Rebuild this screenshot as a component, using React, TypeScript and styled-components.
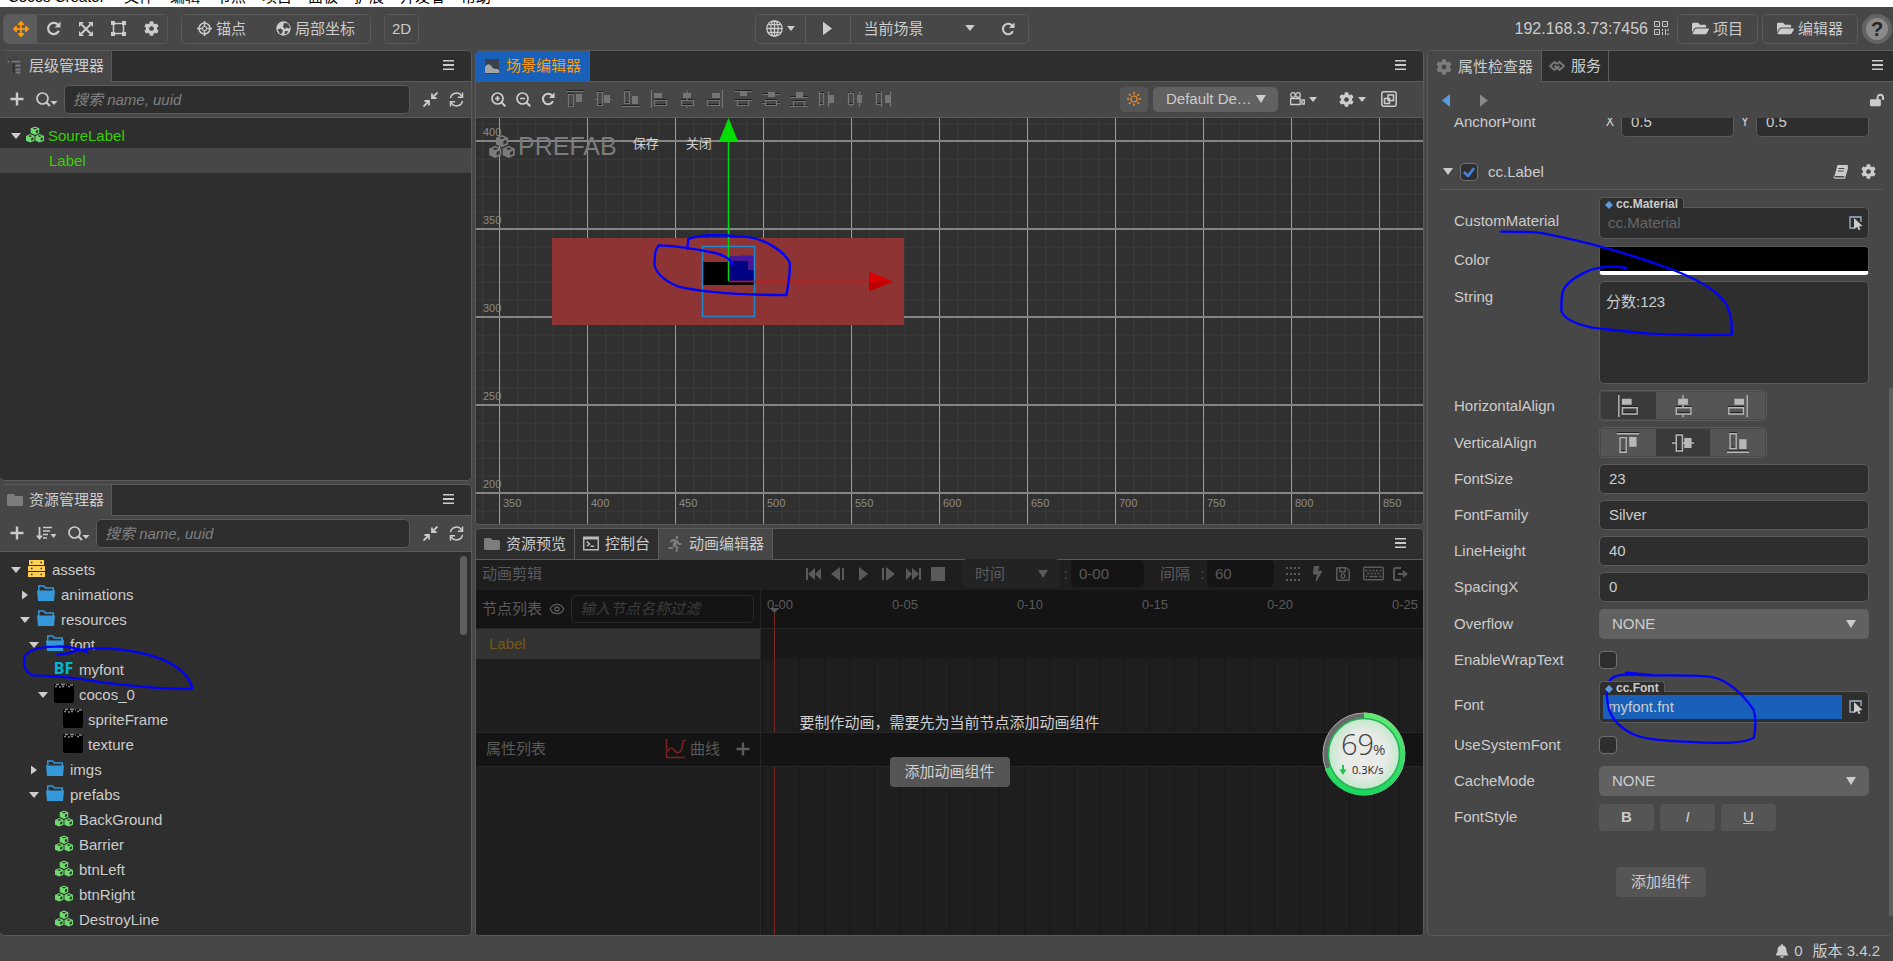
import React from 'react';
import styled, { createGlobalStyle, css } from 'styled-components';
import { FaArrowsAlt, FaBell, FaBolt, FaCog, FaFolder, FaFolderOpen, FaLockOpen, FaRegKeyboard, FaRegSave, FaRunning } from 'react-icons/fa';
import { Eye } from 'lucide-react';

const sans = `"Liberation Sans", "Noto Sans CJK SC", sans-serif`;

const c = {
  panel: '#474747',
  dark: '#2e2e2e',
  line: '#5a5a5a',
  text: '#cccccc',
  button: '#555555',
  select: '#616161',
  blue: '#1860ba',
  orange: '#fd9a08',
  green: '#38d005',
  prefab: '#6fdb6f',
};

const GlobalStyle = createGlobalStyle`
  * { box-sizing: border-box; }
  body { margin: 0; background: ${c.panel}; color: ${c.text}; font: 15px/20px ${sans}; overflow: hidden; }
  button, input, select, textarea { font: inherit; color: inherit; margin: 0; outline: none; }
  button { border: 0; padding: 0; background: none; }
  svg { display: block; flex: none; }
`;

/* ---------- icons ---------- */

const Svg = ({ w = 16, h = 16, vb, children }: { w?: number; h?: number; vb?: string; children: React.ReactNode }) => (
  <svg width={w} height={h} viewBox={vb || `0 0 ${w} ${h}`} fill="none" aria-hidden="true">{children}</svg>
);

const Caret = ({ w = 8, h = 5 }: { w?: number; h?: number }) => (
  <Svg w={w} h={h} vb="0 0 8 5"><path d="M0 0h8L4 5z" fill="currentColor" /></Svg>
);

const TriDown = () => <Svg w={10} h={8}><path d="M0 0h10L5 8z" fill="currentColor" /></Svg>;
const TriRight = ({ w = 8, h = 12 }: { w?: number; h?: number }) => (
  <Svg w={w} h={h} vb="0 0 8 12"><path d="M0 0l8 6-8 6z" fill="currentColor" /></Svg>
);
const TriLeft = () => <Svg w={8} h={13}><path d="M8 0L0 6.500 8 13z" fill="currentColor" /></Svg>;

const Rotate = ({ s = 15 }: { s?: number }) => (
  <Svg w={s} h={s} vb="0 0 15 15">
    <path d="M12.300 4.300A5.600 5.600 0 1 0 12.800 9.800" stroke="currentColor" strokeWidth="2.200" />
    <path d="M14.500 0.500v6h-6z" fill="currentColor" />
  </Svg>
);

const Scale = () => (
  <Svg w={14} h={14}>
    <path d="M2.500 2.500l9 9M11.500 2.500l-9 9" stroke="currentColor" strokeWidth="2" />
    <path d="M0 0h5L0 5zM14 0v5L9 0zM0 14V9l5 5zM14 14H9l5-5z" fill="currentColor" />
  </Svg>
);

const RectTool = () => (
  <Svg w={15} h={15}>
    <path d="M2.500 2.500h10v10h-10z" stroke="currentColor" strokeWidth="1.500" />
    <path d="M0 0h4v4H0zM11 0h4v4h-4zM0 11h4v4H0zM11 11h4v4h-4z" fill="currentColor" />
  </Svg>
);

const Crosshair = () => (
  <Svg w={15} h={15}>
    <circle cx="7.500" cy="7.500" r="5.500" stroke="currentColor" strokeWidth="1.500" />
    <path d="M7.500 0v6M7.500 9v6M0 7.500h6M9 7.500h6" stroke="currentColor" strokeWidth="1.500" />
    <path d="M5 5h2v2H5zM8 5h2v2H8zM5 8h2v2H5zM8 8h2v2H8z" fill="currentColor" opacity=".55" />
  </Svg>
);

const Earth = () => (
  <Svg w={15} h={15}>
    <circle cx="7.500" cy="7.500" r="7.200" fill="currentColor" />
    <path d="M8 2l4 .5 2 4-1 1-3-1-1 2-2-3zM1.500 8.500l3-1 2.500 2-1 3-2 .5zM9 10l3 0-1 2.500-2.500 1z" fill={c.panel} />
  </Svg>
);

const Globe = () => (
  <Svg w={17} h={17}>
    <g stroke="currentColor" strokeWidth="1.300">
      <circle cx="8.500" cy="8.500" r="7.700" />
      <ellipse cx="8.500" cy="8.500" rx="3.700" ry="7.700" />
      <path d="M8.500 1v15M1 8.500h15M2.200 4.700h12.600M2.200 12.300h12.600" />
    </g>
  </Svg>
);

const Qr = () => (
  <Svg w={15} h={15}>
    <g stroke="currentColor">
      <path d="M.5.5h5v5h-5zM8.500.5h5v5h-5zM.5 8.500h5v5h-5z" />
      <path d="M2.500 3.500h1M10.500 3.500h1M2.500 11.500h1M8.500 8v2M8.500 11v3M11.500 8v6M14 8v2M14 12v2" />
    </g>
  </Svg>
);

const Burger = () => (
  <Svg w={11} h={10}><path d="M0 0h11v1.500H0zM0 4h11v2H0zM0 8.500h11V10H0z" fill="currentColor" /></Svg>
);

const Plus = ({ s = 14 }: { s?: number }) => (
  <Svg w={s} h={s} vb="0 0 14 14"><path d="M7 0.500v13M0.500 7h13" stroke="currentColor" strokeWidth="2.400" /></Svg>
);

const SearchCaret = () => (
  <Svg w={22} h={15}>
    <circle cx="6.500" cy="6.500" r="5.500" stroke="currentColor" strokeWidth="1.700" />
    <path d="M10.500 10.500l3.500 3.500" stroke="currentColor" strokeWidth="2" />
    <path d="M14.500 9h7L18 13z" fill="currentColor" />
  </Svg>
);

const SortCaret = () => (
  <Svg w={22} h={15}>
    <path d="M3.500 1v11M1 9.500l2.500 3 2.500-3" stroke="currentColor" strokeWidth="1.800" />
    <path d="M7 1.500h9M7 5h7M7 8.500h5M7 12h4" stroke="currentColor" strokeWidth="1.600" />
    <path d="M14.500 8h6L17.500 12z" fill="currentColor" />
  </Svg>
);

const Collapse = () => (
  <Svg w={15} h={15}>
    <path d="M14.500.5L10 5M.5 14.500L5 10" stroke="currentColor" strokeWidth="1.800" />
    <path d="M9 1.500v4.500h4.500M1.500 9h4.500v4.500" stroke="currentColor" strokeWidth="1.800" />
  </Svg>
);

const Sync = () => (
  <Svg w={15} h={15}>
    <g stroke="currentColor" strokeWidth="1.500">
      <path d="M1.500 6A6 6 0 0 1 12.800 4.500M13.500 9A6 6 0 0 1 2.200 10.500" />
      <path d="M13.500.5v4.800H9M1.500 14.500V9.700H6" />
    </g>
  </Svg>
);

const ZoomGlass = ({ plus }: { plus?: boolean }) => (
  <Svg w={15} h={15}>
    <circle cx="6.500" cy="6.500" r="5.500" stroke="currentColor" strokeWidth="1.700" />
    <path d="M10.500 10.500l3.800 3.800" stroke="currentColor" strokeWidth="2" />
    <path d={plus ? 'M4 6.500h5M6.500 4v5' : 'M4 6.500h5'} stroke="currentColor" strokeWidth="1.700" />
  </Svg>
);

const BookIcon = () => (
  <Svg w={15} h={14}>
    <path d="M4.500 0H15l-3 11H1.500z" fill="currentColor" />
    <path d="M1 11.500c0 1 .5 1.700 1.500 1.700h9L14.700 2" stroke="currentColor" strokeWidth="1.200" />
    <path d="M5.500 3.500h6M4.800 6h6" stroke={c.panel} strokeWidth="1.200" />
  </Svg>
);

const LinkIcon = () => (
  <Svg w={16} h={10}>
    <g stroke="#7d7d7d" strokeWidth="1.800">
      <path d="M8 3L5.500 1 1 5l4.500 4L8 7" />
      <path d="M8 3l2.500-2L15 5l-4.500 4L5.500 4.500M8 7l2.500-2" />
    </g>
  </Svg>
);

type AlignKind = 'top' | 'middle' | 'bottom' | 'left' | 'center' | 'right' | 'dTop' | 'dMiddle' | 'dBottom' | 'dLeft' | 'dCenter' | 'dRight';

const alignShapes: Record<AlignKind, [string, string]> = {
  top: ['M0 1.500h18M2.500 4.500h5v12h-5z', 'M10 4h6v8h-6z'],
  middle: ['M3.500 2.500h5v13h-5zM0 9h3M9 9h9', 'M10 5h6v8h-6z'],
  bottom: ['M0 16.500h18M2.500 1.500h5v12h-5z', 'M10 6h6v8h-6z'],
  left: ['M1.500 0v18M4.500 10.500h12v5h-12z', 'M4 3h8v5H4z'],
  center: ['M9 0v3M9 8v3M9 16v2M3.500 10.500h12v5h-12z', 'M5 3h8v5H5z'],
  right: ['M16.500 0v18M1.500 10.500h12v5h-12z', 'M6 3h8v5H6z'],
  dTop: ['M0 1.500h18M0 10.500h18M3.500 10.500h11v5h-11z', 'M6 2h7v4H6z'],
  dMiddle: ['M0 4.500h18M0 13.500h3M15 13.500h3M3.500 10.500h11v5h-11z', 'M6 2h7v5H6z'],
  dBottom: ['M0 7.500h18M0 16.500h18M3.500 11.500h11v5h-11z', 'M6 2h7v5H6z'],
  dLeft: ['M1.500 1v16M1.500 3.500h4v11h-4M10.500 1v16', 'M11 5h5v8h-5z'],
  dCenter: ['M2.500 3.500h5v11h-5zM5 1v2M5 15v2M13.500 1v16', 'M11 5h5v8h-5z'],
  dRight: ['M2.500 3.500h5v11h-5zM7.500 1v16M16.500 1v16', 'M11 5h5v8h-5z'],
};

const AlignIcon = ({ kind, s = 18 }: { kind: AlignKind; s?: number }) => (
  <Svg w={s} h={s} vb="0 0 18 18">
    <path d={alignShapes[kind][0]} stroke="#222" strokeWidth="1" transform="translate(0 -1)" />
    <path d={alignShapes[kind][0]} stroke="currentColor" strokeWidth="1.200" />
    <path d={alignShapes[kind][1]} fill="currentColor" />
  </Svg>
);

const Cubes = ({ w = 18, h = 17, gap = '#2e2e2e' }: { w?: number; h?: number; gap?: string }) => {
  const cube = (x: number, y: number) => (
    <g transform={`translate(${x} ${y})`}>
      <path d="M4.500 0L9 2v5L4.500 9 0 7V2z" fill="currentColor" />
      <path d="M2.300 2.200L4.500 1.300 6.700 2.200 4.500 3.100z" fill={gap} />
      <path d="M5.500 4.500L7.800 3.500v2.600L5.500 7.200z" fill={gap} />
    </g>
  );
  return <Svg w={w} h={h} vb="0 0 19 17">{cube(5, 0)}{cube(0, 8)}{cube(10, 8)}</Svg>;
};

const FolderBlue = () => (
  <Svg w={18} h={16}>
    <path d="M1.800 6V1h5l1.500 2h8v3" stroke="#3498db" strokeWidth="1.500" />
    <path d="M0 5.500h18L17 16H1z" fill="#3498db" />
  </Svg>
);

const Database = () => (
  <Svg w={17} h={17}>
    <path d="M1 0h15v5H1zM0 6h17v5H0zM0 12h17v5H0z" fill="#ffd052" />
    <path d="M3 2.500h1.500M12.500 2.500H14M3 8.500h1.500M12.500 8.500H14M3 14.500h1.500M12.500 14.500H14" stroke="#2e2e2e" strokeWidth="1.500" />
  </Svg>
);

const Thumb = () => (
  <Svg w={20} h={20}>
    <rect y="1" width="20" height="19" rx="2" fill="#000" />
    <path d="M1 3.500h2M2 1.500h3M5 4h2M7 1.500h4M8 3.500h2M12 2h1M14 3.500h2M16 2h3" stroke="#888" strokeWidth="1.400" />
  </Svg>
);

const HierarchyIcon = () => (
  <Svg w={15} h={15}>
    <path d="M0 1.500h3M4 1.500h9M6 2v11M6 5.500h2M6 9.500h2M6 13.500h2" stroke="#2c2c2c" strokeWidth="1.500" />
    <path d="M0 2.500h2M4 2.500h9M8 6.500h5M8 10.500h5M8 13.500h5" stroke="#7a7a7a" strokeWidth="2" />
  </Svg>
);
const PictureIcon = () => (
  <Svg w={14} h={15}><path d="M0 0h14v15H0z" fill="#39434f" /><path d="M0 8c3-4 5-3 7 0s5 1 7 3v3H0z" fill="#a5a5a5" /></Svg>
);
const ConsoleIcon = () => (
  <Svg w={17} h={15}><path d="M.8.8h15.400v13.400H.8z" stroke="#bbb" strokeWidth="1.500" /><path d="M1 2.500h15" stroke="#bbb" strokeWidth="1.500" /><path d="M4 5.500l3 2.500-3 2.500M8 10.500h4" stroke="#bbb" strokeWidth="1.500" /></Svg>
);
const CameraIcon = () => (
  <Svg w={15} h={14}>
    <g stroke="currentColor" strokeWidth="1.300"><circle cx="3" cy="3" r="2.300" /><circle cx="8" cy="3" r="2.300" /><path d="M.7 6.500h9.500v6H.7zM12 8h2.300v4H12z" /></g>
  </Svg>
);
const BulbIcon = () => (
  <Svg w={14} h={14}>
    <circle cx="7" cy="7" r="3" stroke="#f08c28" strokeWidth="1.200" />
    <path d="M7 0v2.500M7 11.500V14M0 7h2.500M11.500 7H14M2 2l1.700 1.700M10.300 10.300L12 12M2 12l1.700-1.700M10.300 3.700L12 2" stroke="#f08c28" strokeWidth="1.500" />
  </Svg>
);
const WindowIcon = () => (
  <Svg w={16} h={16}>
    <g stroke="currentColor" strokeWidth="1.500"><rect x=".8" y=".8" width="14.400" height="14.400" rx="2" /><path d="M3.500 7.500h5v5h-5zM7 4h5.500v5.500H7z" /></g>
  </Svg>
);
const PickIcon = () => (
  <Svg w={14} h={14}><path d="M12 6V1H1v11h5" stroke="#9fb4cc" strokeWidth="1.300" /><path d="M5 2l8.500 8-3.500.500 1.500 3-2 .500-1.300-3L5 13z" fill="#ccc" /></Svg>
);
const Diamond = () => <Svg w={8} h={8}><path d="M4 0l4 4-4 4-4-4z" fill="#5a9be0" /></Svg>;

const transport: Record<string, string> = {
  first: 'M0 1h2v12H0zM9 1v12L2 7zM15 1v12L9 7z',
  prev: 'M9 0v14L0 7zM11 1h2v12h-2z',
  play: 'M3 0l9 7-9 7z',
  next: 'M1 1h2v12H1zM5 0l9 7-9 7z',
  last: 'M0 1l6 6-6 6zM6 1l7 6-7 6zM13 1h2v12h-2z',
  stop: 'M0 0h14v14H0z',
};

/* ---------- layout ---------- */

const Page = styled.div`
  height: 100vh;
  display: flex;
  flex-direction: column;
`;

const MenuStrip = styled.nav`
  height: 7px;
  flex: none;
  background: #fff;
  color: #000;
  overflow: hidden;
  display: flex;
  align-items: flex-end;
  gap: 16px;
  padding: 0 0 0 8px;
  line-height: 14px;
  & > span { margin-bottom: 3px; }
  & > span:first-child { width: 100px; }
`;

const TopBar = styled.header`
  flex: none;
  height: 43px;
  padding: 0 1px 0 3px;
  display: flex;
  align-items: center;
`;

const TopLeft = styled.div`
  width: calc(40% - 4px);
  display: flex;
  gap: 13px;
`;

const TopRight = styled.div`
  margin-left: auto;
  display: flex;
  align-items: center;
  gap: 4px;
`;

const Group = styled.div`
  display: flex;
  height: 30px;
  border: 1px solid ${c.line};
  border-radius: 5px;
  overflow: hidden;
`;

const BarButton = styled.button<{ $w?: number; $active?: boolean; $divided?: boolean }>`
  display: flex;
  align-items: center;
  justify-content: center;
  gap: 4px;
  ${p => (p.$w ? `width: ${p.$w}px;` : 'padding: 0 15px;')}
  ${p => p.$active && css`background: #5c5c5c; color: ${c.orange};`}
  ${p => p.$divided && css`border-right: 1px solid ${c.line};`}
`;

const OutlineButton = styled(BarButton)`
  height: 30px;
  padding: 0 14px;
  border: 1px solid ${c.line};
  border-radius: 5px;
  color: ${c.text};
`;

const Help = styled.button`
  width: 30px;
  height: 30px;
  border-radius: 50%;
  background: #8a8a8a;
  border: 4px solid #646464;
  color: #222;
  font-size: 20px;
  font-weight: bold;
`;

const Address = styled.span`
  display: flex;
  align-items: center;
  gap: 6px;
  font-size: 16px;
  margin-right: 4px;
`;

const Workspace = styled.main`
  flex: 1;
  min-height: 0;
  display: grid;
  grid-template-columns: 472px minmax(0, 1fr) 466px;
  gap: 3px;
`;

const Column = styled.div`
  display: flex;
  flex-direction: column;
  gap: 3px;
  min-height: 0;
  min-width: 0;
`;

const Panel = styled.section<{ $grow: number }>`
  flex: ${p => p.$grow} 1 0;
  min-height: 0;
  display: flex;
  flex-direction: column;
  border: 1px solid ${c.line};
  border-radius: 5px;
  background: ${c.panel};
  overflow: hidden;
  position: relative;
`;

const SidePanel = styled(Panel)<{ $side: 'left' | 'right' }>`
  ${p => (p.$side === 'left' ? 'border-left: 0;' : 'border-right: 0; border-top-right-radius: 0;')}
`;

const TabBar = styled.div<{ $end?: number }>`
  flex: none;
  height: 31px;
  display: flex;
  align-items: stretch;
  background: ${c.dark};
  border-bottom: 1px solid ${c.line};
  padding-right: ${p => p.$end ?? 17}px;
  & > button:last-child { margin-left: auto; margin-bottom: 2px; }
`;

const Tab = styled.button<{ $state?: 'active' | 'focus' }>`
  display: flex;
  align-items: center;
  gap: 6px;
  padding: 0 7px;
  border-right: 1px solid ${c.line};
  & > svg { width: 16px; color: #7d7d7d; }
  ${p => p.$state === 'active' && css`background: ${c.panel}; margin-bottom: -1px; padding-bottom: 1px;`}
  ${p => p.$state === 'focus' && css`background: ${c.blue}; color: ${c.orange};`}
`;

const WideTab = styled(Tab)`
  padding: 0 8px;
`;

const ToolRow = styled.div`
  flex: none;
  height: 36px;
  display: flex;
  align-items: center;
  padding: 0 1px 1px 2px;
  border-bottom: 1px solid ${c.line};
`;

const IconButton = styled.button<{ $w: number; $color?: string }>`
  width: ${p => p.$w}px;
  display: flex;
  align-items: center;
  justify-content: center;
  gap: 4px;
  flex: none;
  ${p => p.$color && `color: ${p.$color};`}
`;

const PickButton = styled(IconButton)`
  justify-content: flex-end;
  padding-right: 2px;
`;

const SearchBox = styled.input`
  flex: 1;
  min-width: 0;
  height: 29px;
  background: ${c.dark};
  border: 1px solid ${c.line};
  border-radius: 5px;
  padding: 0 8px;
  margin: 0 8px 0 1px;
  &::placeholder { color: #808080; font-style: italic; opacity: 1; }
`;

const TreeBody = styled.div`
  flex: 1;
  min-height: 0;
  overflow: hidden;
  background: ${c.dark};
  padding-top: 5px;
  position: relative;
`;

const TreeRow = styled.div<{ $depth: number; $selected?: boolean; $color?: string }>`
  height: 25px;
  display: flex;
  align-items: center;
  padding-left: ${p => 10 + p.$depth * 9}px;
  background: ${p => (p.$selected ? c.panel : 'transparent')};
  color: ${p => p.$color || c.text};
`;

const ArrowSlot = styled.span`
  width: 11px;
  display: flex;
  justify-content: center;
  color: ${c.text};
`;

const IconSlot = styled.span<{ $w: number; $color?: string }>`
  width: ${p => p.$w}px;
  display: flex;
  justify-content: center;
  padding-bottom: 3px;
  color: ${p => p.$color || c.text};
`;

const BitmapFont = styled.b`
  font: bold 16px/18px "Noto Sans", sans-serif;
  color: #00b8d4;
`;

const ScrollThumb = styled.div<{ $top: number; $bottom: number; $right: number; $w: number }>`
  position: absolute;
  top: ${p => p.$top}px;
  bottom: ${p => p.$bottom}px;
  right: ${p => p.$right}px;
  width: ${p => p.$w}px;
  border-radius: 4px;
  background: #5f5f5f;
`;

const ScribbleSvg = styled.svg<{ $x: number; $y: number }>`
  position: absolute;
  left: ${p => p.$x}px;
  top: ${p => p.$y}px;
  pointer-events: none;
`;

const Scribble = ({ x, y, w, h, vb, d }: { x: number; y: number; w: number; h: number; vb: string; d: string }) => (
  <ScribbleSvg $x={x} $y={y} width={w} height={h} viewBox={vb} fill="none" aria-hidden="true">
    <path d={d} stroke="#0000ff" strokeWidth="7" strokeLinecap="round" strokeLinejoin="round" />
  </ScribbleSvg>
);

/* ---------- scene ---------- */

const SelectWrap = styled.span<{ $w?: number; $h: number; $bg: string; $arrow?: number }>`
  position: relative;
  display: block;
  flex: none;
  width: ${p => (p.$w ? `${p.$w}px` : '100%')};
  height: ${p => p.$h}px;
  border-radius: 5px;
  background: ${p => p.$bg};
  select {
    appearance: none;
    width: 100%;
    height: 100%;
    border: 0;
    background: transparent;
    padding: 0 13px;
    display: block;
  }
  svg {
    position: absolute;
    right: ${p => p.$arrow ?? 13}px;
    top: calc(50% - 4px);
    pointer-events: none;
  }
`;

const BulbButton = styled.button`
  width: 28px;
  height: 25px;
  border-radius: 4px;
  background: ${c.button};
  display: flex;
  align-items: center;
  justify-content: center;
  margin-right: 5px;
`;

const SceneTools = styled(ToolRow)`
  padding: 0 22px 1px 10px;
  & > ${BulbButton} { margin-left: auto; }
`;

const SceneView = styled.div`
  flex: 1;
  min-height: 0;
  position: relative;
  background: #303030;
  overflow: hidden;
`;

const SceneDrawing = styled.svg`
  position: absolute;
  inset: 0;
`;

const PrefabBar = styled.div`
  position: relative;
  display: flex;
  align-items: center;
  padding: 13px 0 0 13px;
  height: 43px;
  color: #7c7c7c;
  font-size: 25px;
  gap: 3px;
  button { font-size: 13px; color: #d0d0d0; margin-left: 13px; padding-bottom: 4px; }
  button + button { margin-left: 24px; }
`;

const Scene = () => {
  const xs = [350, 400, 450, 500, 550, 600, 650, 700, 750, 800, 850];
  const ys = [400, 350, 300, 250, 200];
  return (
    <SceneView>
      <SceneDrawing width="100%" height="100%">
        <defs>
          <pattern id="minor" width="17.600" height="17.600" patternUnits="userSpaceOnUse" x="6" y="5.500">
            <path d="M0 0h17.600M0 0v17.600" stroke="#3a3a3a" strokeWidth="2" />
          </pattern>
          <pattern id="major" width="88" height="88" patternUnits="userSpaceOnUse" x="23" y="22">
            <path d="M.5 0v88" stroke="#999" />
            <path d="M0 1h88" stroke="#858585" strokeWidth="2" />
          </pattern>
        </defs>
        <rect width="100%" height="100%" fill="url(#minor)" />
        <rect width="100%" height="100%" fill="url(#major)" />
        <g fill="#8a8a8a" fontSize="11" fontFamily="Liberation Sans">
          {ys.map((v, i) => <text key={v} x="7" y={18 + i * 88}>{v}</text>)}
          {xs.map((v, i) => <text key={v} x={27 + i * 88} y="389">{v}</text>)}
        </g>
        <rect x="76" y="120" width="352" height="87" fill="#8f3434" />
        <path d="M226 144h52v23h-52z" fill="#000" />
        <path d="M252 138h26v14h-26z" fill="#481892" />
        <path d="M252 143h20v9h6v11h-26z" fill="#000083" />
        <path d="M264 138h14v14" stroke="#2a1ad0" fill="none" />
        <path d="M226.500 128.500h52v70h-52z" fill="none" stroke="#1f86cf" strokeWidth="1.500" />
        <path d="M252.500 20v143" stroke="#00d414" strokeWidth="1.500" />
        <path d="M252.500 0l9.500 23h-19z" fill="#00dd00" />
        <path d="M253 163.500h141" stroke="#e00d0d" strokeWidth="1.500" />
        <path d="M393 153.500l24 10-24 10z" fill="#d80000" />
        <path d="M393 163.500h24l-24 10z" fill="#a80000" opacity=".5" />
      </SceneDrawing>
      <PrefabBar>
        <Cubes w={26} h={23} gap="#303030" />
        PREFAB
        <button type="button">保存</button>
        <button type="button">关闭</button>
      </PrefabBar>
      <Scribble
        x={174} y={112} w={147} h={70} vb="540 150 441 210"
        d="M788 253C780 235 760 225 735 219C680 207 620 198 568 196C555 205 553 235 554 258C562 285 590 305 625 320C690 335 780 345 950 345C952 320 960 300 960 250C945 215 880 170 810 170C750 164 690 163 655 177L652 207"
      />
    </SceneView>
  );
};

/* ---------- animation ---------- */

const AnimArea = styled.div`
  flex: 1;
  min-height: 0;
  display: flex;
  flex-direction: column;
  position: relative;
  background: #1e1e1e;
  color: #5a5a5a;
`;

const AnimTools = styled.div`
  flex: none;
  height: 30px;
  display: flex;
  align-items: center;
  padding: 0 6px 2px 6px;
`;

const AnimEnd = styled.div`
  margin-left: auto;
  display: flex;
  align-items: center;
`;

const AnimInput = styled.input<{ $w: number }>`
  width: ${p => p.$w}px;
  height: 27px;
  border: 0;
  border-radius: 5px;
  background: #141414;
  padding: 0 8px;
`;

const Colon = styled.span<{ $w: number }>`
  width: ${p => p.$w}px;
  text-align: center;
`;

const FieldLabel = styled.label`
  padding-left: 16px;
`;

const TrackGrid = styled.div`
  flex: 1;
  min-height: 0;
  display: grid;
  grid-template-columns: 285px minmax(0, 1fr);
  grid-template-rows: 39px 30px 73px 35px minmax(0, 1fr);
`;

const Cell = styled.div<{ $bg: string; $edge?: boolean; $top?: boolean }>`
  display: flex;
  align-items: center;
  background-color: ${p => p.$bg};
  border-right: 1px solid #262626;
  padding: 0 6px;
  min-width: 0;
  ${p => p.$edge && css`border-bottom: 1px solid #262626;`}
  ${p => p.$top && css`border-top: 1px solid #262626;`}
`;

const Track = styled(Cell)<{ $plain?: boolean }>`
  border-right: 0;
  ${p => !p.$plain && css`
    background-image:
      linear-gradient(#7d2626, #7d2626),
      repeating-linear-gradient(90deg, #181818 0 1px, transparent 1px 25px);
    background-repeat: no-repeat, repeat;
    background-size: 1px 100%, auto;
    background-position: 13px 0, 13px 0;
  `}
`;

const Ruler = styled(Track)`
  position: relative;
  overflow: hidden;
  align-items: flex-start;
  padding: 5px 0 0 6px;
  font-size: 13px;
  span { flex: 0 0 125px; }
  svg { position: absolute; left: 8px; top: 18px; }
`;

const FilterInput = styled(SearchBox)`
  height: 28px;
  background: transparent;
  border-color: #2a2a2a;
  margin: 0;
  &::placeholder { color: #3c3c3c; }
`;

const NodeHead = styled(Cell)`
  gap: 6px;
  label { display: flex; align-items: center; gap: 7px; }
`;

const LabelCell = styled(Cell)`
  padding-left: 13px;
  color: #75591a;
`;

const PropHead = styled(Cell)`
  padding: 0 10px;
  gap: 4px;
  & > svg { margin-left: auto; }
  & > button { margin-left: 12px; }
`;

const Notice = styled.div`
  position: absolute;
  inset: 0;
  display: flex;
  flex-direction: column;
  align-items: center;
  justify-content: center;
  gap: 22px;
  padding-top: 3px;
  color: #d0d0d0;
  line-height: 24px;
`;

const SolidButton = styled.button<{ $w: number; $h: number }>`
  width: ${p => p.$w}px;
  height: ${p => p.$h}px;
  border-radius: 4px;
  background: ${c.button};
`;

const Meter = styled.div`
  position: absolute;
  right: 17px;
  bottom: 139px;
  width: 84px;
  height: 84px;
`;

const Animation = () => (
  <AnimArea>
    <AnimTools>
      动画剪辑
      <AnimEnd>
        {Object.keys(transport).map(k => (
          <IconButton key={k} type="button" aria-label={k} $w={25}>
            <Svg w={15} h={14}><path d={transport[k]} fill="currentColor" /></Svg>
          </IconButton>
        ))}
        <Colon $w={11} />
        <SelectWrap $w={98} $h={29} $bg="#232323" $arrow={12}>
          <select aria-label="时间"><option>时间</option></select>
          <TriDown />
        </SelectWrap>
        <Colon $w={11}>:</Colon>
        <AnimInput $w={73} aria-label="时间" defaultValue="0-00" />
        <FieldLabel htmlFor="gap">间隔</FieldLabel>
        <Colon $w={17}>&nbsp; :</Colon>
        <AnimInput $w={67} id="gap" defaultValue="60" />
        <IconButton type="button" aria-label="网格" $w={38}>
          <Svg w={14} h={14}>
            {[0, 4, 8, 12].map(x => [0, 6, 12].map(y => <path key={`${x}-${y}`} d={`M${x} ${y}h2v2h-2z`} fill="currentColor" />))}
          </Svg>
        </IconButton>
        <IconButton type="button" aria-label="事件" $w={10}><FaBolt size={15} /></IconButton>
        <IconButton type="button" aria-label="保存" $w={41}><FaRegSave size={16} /></IconButton>
        <IconButton type="button" aria-label="快捷键" $w={20}><FaRegKeyboard size={21} /></IconButton>
        <IconButton type="button" aria-label="退出" $w={34}>
          <Svg w={15} h={14}><path d="M8 1H3a2 2 0 0 0-2 2v8a2 2 0 0 0 2 2h5M5 7h6" stroke="currentColor" strokeWidth="2" /><path d="M10 3l5 4-5 4z" fill="currentColor" /></Svg>
        </IconButton>
      </AnimEnd>
    </AnimTools>
    <TrackGrid>
      <NodeHead $bg="#141414" $edge>
        <label htmlFor="nodefilter">节点列表 <Eye size={16} /></label>
        <FilterInput id="nodefilter" placeholder="输入节点名称过滤" />
      </NodeHead>
      <Ruler $bg="#141414" $edge $plain>
        {['0-00', '0-05', '0-10', '0-15', '0-20', '0-25'].map(t => <span key={t}>{t}</span>)}
        <Svg w={11} h={21}><path d="M5.500 5v16" stroke="#7d2626" /><path d="M.5 0h10l-5 5z" fill="#555" /></Svg>
      </Ruler>
      <LabelCell $bg="#333333">Label</LabelCell>
      <Track $bg="#191919" />
      <Cell $bg="#1e1e1e" />
      <Track $bg="#1e1e1e" />
      <PropHead $bg="#141414" $edge $top>
        属性列表
        <Svg w={21} h={20}><path d="M1.500 0v18.500H20" stroke="#7d2020" strokeWidth="1.500" /><path d="M2 13c4-6 6-4 8-1s6 2 7-3l1-7 3-1" stroke="#7d2020" strokeWidth="1.500" /></Svg>
        曲线
        <button type="button" aria-label="添加属性"><Plus /></button>
      </PropHead>
      <Track $bg="#141414" $edge $top $plain />
      <Cell $bg="#1e1e1e" />
      <Track $bg="#1e1e1e" />
    </TrackGrid>
    <Notice>
      要制作动画，需要先为当前节点添加动画组件
      <SolidButton type="button" $w={120} $h={30}>添加动画组件</SolidButton>
    </Notice>
    <Meter>
      <svg width="84" height="84" viewBox="0 0 84 84">
        <defs>
          <radialGradient id="face"><stop offset=".6" stopColor="#e9ebe9" /><stop offset="1" stopColor="#c4e8cc" /></radialGradient>
          <linearGradient id="ring" x2="0" y2="1"><stop offset="0" stopColor="#5fe973" /><stop offset="1" stopColor="#1ed760" /></linearGradient>
        </defs>
        <circle cx="42" cy="42" r="38" stroke="#6a6a6a" strokeWidth="6" fill="none" />
        <circle cx="42" cy="42" r="41" stroke="#aaa" strokeWidth="1" fill="none" />
        <path d="M42 3.500A38.500 38.500 0 1 1 5.500 56" stroke="url(#ring)" strokeWidth="6" fill="none" />
        <circle cx="42" cy="42" r="35.500" fill="url(#face)" stroke="#22b455" strokeWidth="1.500" />
        <g fontFamily="Open Sans" fill="#444">
          <text x="19" y="43" fontSize="29" fontWeight="300">69</text>
          <text x="51" y="43" fontSize="15">%</text>
          <text x="30" y="62" fontSize="11" fill="#222">0.3K/s</text>
        </g>
        <path d="M21 53v6" stroke="#22c04c" strokeWidth="2" />
        <path d="M17.500 57.500h7L21 63z" fill="#22c04c" />
      </svg>
    </Meter>
  </AnimArea>
);

/* ---------- inspector ---------- */

const NavRow = styled.div`
  flex: none;
  height: 36px;
  display: flex;
  align-items: center;
  padding: 0 8px 0 10px;
  & > button:last-child { margin-left: auto; }
`;

const InspectorBody = styled.div`
  flex: 1;
  min-height: 0;
  overflow: hidden;
  position: relative;
  padding: 0 11px 0 12px;
`;

const Props = styled.div<{ $shift?: boolean }>`
  display: flex;
  flex-direction: column;
  gap: 6px;
  padding: 0 13px 0 14px;
  ${p => (p.$shift ? 'margin-top: -11px;' : 'padding-top: 7px;')}
`;

const PropRow = styled.div<{ $h: number; $align?: string }>`
  display: grid;
  grid-template-columns: 145px minmax(0, 1fr);
  align-items: ${p => p.$align || 'center'};
  height: ${p => p.$h}px;
`;

const TextField = styled.input`
  width: 100%;
  min-width: 0;
  height: 30px;
  background: ${c.dark};
  border: 1px solid ${c.line};
  border-radius: 5px;
  padding: 0 9px 1px;
`;

const TextArea = styled.textarea`
  display: block;
  width: 100%;
  height: 103px;
  resize: none;
  background: ${c.dark};
  border: 1px solid ${c.line};
  border-radius: 5px;
  padding: 10px 6px;
`;

const TopLabel = styled.label`
  padding-top: 6px;
`;

const AxisFields = styled.div`
  display: flex;
  align-items: center;
  label { flex: 0 0 22px; text-align: center; font: 14px/20px "Liberation Mono", monospace; }
`;

const Check = styled.input`
  appearance: none;
  width: 18px;
  height: 18px;
  border: 1px solid #707070;
  border-radius: 4px;
  background: ${c.dark};
  display: block;
`;

const CheckBoxOn = styled.span`
  position: relative;
  margin: 0 10px 0 7px;
  svg { position: absolute; left: 3px; top: 4px; pointer-events: none; }
`;

const SectionHead = styled.div`
  height: 34px;
  margin-top: 19px;
  padding: 0 6px 2px 3px;
  display: flex;
  align-items: center;
  border-bottom: 1px solid ${c.line};
  & > button { margin-left: 13px; }
  & > button:nth-of-type(1) { margin-left: auto; }
`;

const AssetField = styled.div`
  height: 42px;
  display: flex;
  flex-direction: column;
`;

const AssetTag = styled.span`
  position: relative;
  align-self: flex-start;
  height: 11px;
  display: flex;
  align-items: center;
  gap: 3px;
  padding: 3px 5px 0 5px;
  font-size: 12px;
  font-weight: bold;
  line-height: 11px;
  background: ${c.dark};
  border: 1px solid ${c.line};
  border-bottom: 0;
  border-radius: 4px 4px 0 0;
  z-index: 1;
`;

const AssetBox = styled.div`
  flex: 1;
  display: flex;
  align-items: stretch;
  margin-top: -1px;
  padding: 3px;
  background: ${c.dark};
  border: 1px solid ${c.line};
  border-radius: 0 5px 5px 5px;
`;

const AssetValue = styled.input<{ $filled?: boolean }>`
  flex: 1;
  min-width: 0;
  border: 0;
  padding: 0 5px;
  background: ${p => (p.$filled ? c.blue : 'transparent')};
  &::placeholder { color: #666; opacity: 1; }
`;

const ColorSwatch = styled.button`
  display: block;
  width: 100%;
  height: 29px;
  background: #000;
  border: 1px solid ${c.line};
  border-bottom: 4px solid #fff;
  border-radius: 4px;
`;

const Segments = styled.div`
  display: flex;
  width: 168px;
  height: 31px;
  border: 1px solid ${c.line};
  border-radius: 5px;
  overflow: hidden;
  padding: 1px;
`;

const Segment = styled.button<{ $on?: boolean }>`
  flex: 1;
  display: flex;
  align-items: center;
  justify-content: center;
  color: #b8b8b8;
  background: ${p => (p.$on ? '#3a3a3a' : c.button)};
`;

const StyleButtons = styled.div`
  display: flex;
  gap: 6px;
`;

const AddButton = styled(SolidButton)`
  display: block;
  margin: 35px 0 0 176px;
`;

const Asset = ({ id, type, value, filled }: { id: string; type: string; value?: string; filled?: boolean }) => (
  <AssetField>
    <AssetTag><Diamond />{type}</AssetTag>
    <AssetBox>
      <AssetValue id={id} readOnly $filled={filled} defaultValue={value} placeholder={type} />
      <PickButton type="button" aria-label={`选择 ${type}`} $w={23}><PickIcon /></PickButton>
    </AssetBox>
  </AssetField>
);

const SelectField = ({ id, value }: { id: string; value: string }) => (
  <SelectWrap $h={30} $bg={c.select}>
    <select id={id}><option>{value}</option></select>
    <TriDown />
  </SelectWrap>
);

const textFields: [string, string][] = [['FontSize', '23'], ['FontFamily', 'Silver'], ['LineHeight', '40'], ['SpacingX', '0']];

const Inspector = () => (
  <InspectorBody>
    <Props $shift>
      <PropRow $h={30}>
        <span>AnchorPoint</span>
        <AxisFields>
          <label htmlFor="ax">X</label><TextField id="ax" defaultValue="0.5" />
          <label htmlFor="ay">Y</label><TextField id="ay" defaultValue="0.5" />
        </AxisFields>
      </PropRow>
    </Props>
    <SectionHead>
      <Svg w={10} h={7}><path d="M0 0h10L5 7z" fill="currentColor" /></Svg>
      <CheckBoxOn>
        <Check id="cclabel" type="checkbox" defaultChecked />
        <Svg w={12} h={10}><path d="M1 5l4 4 6-8" stroke="#3f80e0" strokeWidth="2.800" /></Svg>
      </CheckBoxOn>
      <label htmlFor="cclabel">cc.Label</label>
      <button type="button" aria-label="文档"><BookIcon /></button>
      <button type="button" aria-label="设置"><FaCog size={15} /></button>
    </SectionHead>
    <Props>
      <PropRow $h={42}>
        <TopLabel htmlFor="mat">CustomMaterial</TopLabel>
        <Asset id="mat" type="cc.Material" />
      </PropRow>
      <PropRow $h={30}>
        <label htmlFor="color">Color</label>
        <ColorSwatch id="color" type="button" aria-label="Color" />
      </PropRow>
      <PropRow $h={103} $align="start">
        <TopLabel htmlFor="string">String</TopLabel>
        <TextArea id="string" defaultValue="分数:123" />
      </PropRow>
      <PropRow $h={31}>
        <span>HorizontalAlign</span>
        <Segments>
          {(['left', 'center', 'right'] as AlignKind[]).map((k, i) => (
            <Segment key={k} type="button" aria-label={k} $on={i === 0}><AlignIcon kind={k} s={22} /></Segment>
          ))}
        </Segments>
      </PropRow>
      <PropRow $h={31}>
        <span>VerticalAlign</span>
        <Segments>
          {(['top', 'middle', 'bottom'] as AlignKind[]).map((k, i) => (
            <Segment key={k} type="button" aria-label={k} $on={i === 1}><AlignIcon kind={k} s={22} /></Segment>
          ))}
        </Segments>
      </PropRow>
      {textFields.map(([name, value]) => (
        <PropRow key={name} $h={30}>
          <label htmlFor={name}>{name}</label>
          <TextField id={name} defaultValue={value} />
        </PropRow>
      ))}
      <PropRow $h={31}>
        <label htmlFor="overflow">Overflow</label>
        <SelectField id="overflow" value="NONE" />
      </PropRow>
      <PropRow $h={30}>
        <label htmlFor="wrap">EnableWrapText</label>
        <Check id="wrap" type="checkbox" />
      </PropRow>
      <PropRow $h={42}>
        <TopLabel htmlFor="font">Font</TopLabel>
        <Asset id="font" type="cc.Font" value="myfont.fnt" filled />
      </PropRow>
      <PropRow $h={31}>
        <label htmlFor="sysfont">UseSystemFont</label>
        <Check id="sysfont" type="checkbox" />
      </PropRow>
      <PropRow $h={30}>
        <label htmlFor="cache">CacheMode</label>
        <SelectField id="cache" value="NONE" />
      </PropRow>
      <PropRow $h={30}>
        <span>FontStyle</span>
        <StyleButtons>
          <SolidButton type="button" $w={55} $h={27}><b>B</b></SolidButton>
          <SolidButton type="button" $w={55} $h={27}><i>I</i></SolidButton>
          <SolidButton type="button" $w={55} $h={27}><u>U</u></SolidButton>
        </StyleButtons>
      </PropRow>
    </Props>
    <AddButton type="button" $w={90} $h={30}>添加组件</AddButton>
    <ScrollThumb $top={269} $bottom={19} $right={0} $w={4} />
    <Scribble
      x={70} y={111} w={238} h={109} vb="234 117 714 327"
      d="M244 125C300 125 340 125 370 130C500 155 640 195 760 240C850 275 900 310 920 345C935 375 937 400 935 434C850 436 750 434 690 431C630 426 560 418 540 416C500 412 480 405 455 393C430 380 425 370 424 360C424 330 425 310 430 300C445 270 480 255 510 240C550 228 590 228 619 234"
    />
    <Scribble
      x={175} y={552} w={156} h={76} vb="549 660 468 228"
      d="M692 675L618 668C640 682 780 672 870 680C910 685 940 710 965 735C985 757 995 770 1001 780C1007 800 1008 830 1002 862C980 878 910 880 860 878C780 874 690 873 645 855C600 835 575 805 566 775C558 740 558 705 572 688C585 675 605 672 640 675"
    />
  </InspectorBody>
);

/* ---------- tree ---------- */

type Node = { name: string; depth: number; open?: boolean; icon: 'db' | 'folder' | 'bf' | 'thumb' | 'prefab' };

const assets: Node[] = [
  { name: 'assets', depth: 0, open: true, icon: 'db' },
  { name: 'animations', depth: 1, open: false, icon: 'folder' },
  { name: 'resources', depth: 1, open: true, icon: 'folder' },
  { name: 'font', depth: 2, open: true, icon: 'folder' },
  { name: 'myfont', depth: 3, icon: 'bf' },
  { name: 'cocos_0', depth: 3, open: true, icon: 'thumb' },
  { name: 'spriteFrame', depth: 4, icon: 'thumb' },
  { name: 'texture', depth: 4, icon: 'thumb' },
  { name: 'imgs', depth: 2, open: false, icon: 'folder' },
  { name: 'prefabs', depth: 2, open: true, icon: 'folder' },
  { name: 'BackGround', depth: 3, icon: 'prefab' },
  { name: 'Barrier', depth: 3, icon: 'prefab' },
  { name: 'btnLeft', depth: 3, icon: 'prefab' },
  { name: 'btnRight', depth: 3, icon: 'prefab' },
  { name: 'DestroyLine', depth: 3, icon: 'prefab' },
];

const nodeIcons = { db: <Database />, folder: <FolderBlue />, bf: <BitmapFont>BF</BitmapFont>, thumb: <Thumb />, prefab: <Cubes /> };

const Arrow = ({ open }: { open?: boolean }) => (
  <ArrowSlot>
    {open === true && <Svg w={10} h={6}><path d="M0 0h10L5 6z" fill="currentColor" /></Svg>}
    {open === false && <TriRight w={6} h={10} />}
  </ArrowSlot>
);

const Menu = () => <IconButton type="button" aria-label="菜单" $w={11}><Burger /></IconButton>;

const StatusBar = styled.footer`
  flex: none;
  height: 25px;
  display: flex;
  align-items: center;
  justify-content: flex-end;
  gap: 5px;
  padding: 5px 13px 0 0;
  span + span { margin-left: 5px; }
`;

export default function App() {
  return (
    <Page>
      <GlobalStyle />
      <MenuStrip>
        {['Cocos Creator', '文件', '编辑', '节点', '项目', '面板', '扩展', '开发者', '帮助'].map(t => <span key={t}>{t}</span>)}
      </MenuStrip>
      <TopBar>
        <TopLeft>
          <Group>
            <BarButton type="button" aria-label="移动" $w={33} $active><FaArrowsAlt size={16} /></BarButton>
            <BarButton type="button" aria-label="旋转" $w={33}><Rotate /></BarButton>
            <BarButton type="button" aria-label="缩放" $w={32}><Scale /></BarButton>
            <BarButton type="button" aria-label="矩形" $w={33}><RectTool /></BarButton>
            <BarButton type="button" aria-label="设置" $w={32}><FaCog size={15} /></BarButton>
          </Group>
          <Group>
            <BarButton type="button"><Crosshair />锚点</BarButton>
            <BarButton type="button"><Earth />局部坐标</BarButton>
          </Group>
          <Group><BarButton type="button" $w={33}>2D</BarButton></Group>
        </TopLeft>
        <Group>
          <BarButton type="button" aria-label="平台" $w={50} $divided><Globe /><Caret /></BarButton>
          <BarButton type="button" aria-label="播放" $w={45} $divided><TriRight w={9} h={15} /></BarButton>
          <SelectWrap $w={137} $h={28} $bg="transparent" $arrow={13}>
            <select aria-label="场景"><option>当前场景</option></select>
            <Caret w={10} h={6} />
          </SelectWrap>
          <BarButton type="button" aria-label="刷新" $w={40}><Rotate s={14} /></BarButton>
        </Group>
        <TopRight>
          <Address>192.168.3.73:7456 <Qr /></Address>
          <OutlineButton type="button"><FaFolderOpen size={17} />项目</OutlineButton>
          <OutlineButton type="button"><FaFolderOpen size={17} />编辑器</OutlineButton>
          <Help type="button">?</Help>
        </TopRight>
      </TopBar>
      <Workspace>
        <Column>
          <SidePanel $side="left" $grow={431}>
            <TabBar>
              <Tab type="button" $state="active"><HierarchyIcon />层级管理器</Tab>
              <Menu />
            </TabBar>
            <ToolRow>
              <IconButton type="button" aria-label="新建" $w={29}><Plus /></IconButton>
              <IconButton type="button" aria-label="筛选" $w={32}><SearchCaret /></IconButton>
              <SearchBox aria-label="搜索" placeholder="搜索 name, uuid" />
              <IconButton type="button" aria-label="折叠" $w={24}><Collapse /></IconButton>
              <IconButton type="button" aria-label="刷新" $w={28}><Sync /></IconButton>
            </ToolRow>
            <TreeBody>
              <TreeRow $depth={0} $color={c.green}>
                <Arrow open /><IconSlot $w={27} $color={c.prefab}><Cubes /></IconSlot>SoureLabel
              </TreeRow>
              <TreeRow $depth={0} $selected $color={c.green}>
                <Arrow /><IconSlot $w={28} />Label
              </TreeRow>
            </TreeBody>
          </SidePanel>
          <SidePanel $side="left" $grow={452}>
            <TabBar>
              <Tab type="button" $state="active"><FaFolder size={16} />资源管理器</Tab>
              <Menu />
            </TabBar>
            <ToolRow>
              <IconButton type="button" aria-label="新建" $w={29}><Plus /></IconButton>
              <IconButton type="button" aria-label="排序" $w={32}><SortCaret /></IconButton>
              <IconButton type="button" aria-label="筛选" $w={32}><SearchCaret /></IconButton>
              <SearchBox aria-label="搜索" placeholder="搜索 name, uuid" />
              <IconButton type="button" aria-label="折叠" $w={24}><Collapse /></IconButton>
              <IconButton type="button" aria-label="刷新" $w={28}><Sync /></IconButton>
            </ToolRow>
            <TreeBody>
              {assets.map(n => (
                <TreeRow key={n.name} $depth={n.depth}>
                  <Arrow open={n.open} />
                  <IconSlot $w={31} $color={c.prefab}>{nodeIcons[n.icon]}</IconSlot>
                  {n.name}
                </TreeRow>
              ))}
              <ScrollThumb $top={4} $bottom={300} $right={4} $w={7} />
              <Scribble
                x={20} y={90} w={177} h={51} vb="60 516 531 153"
                d="M172 554C215 552 230 535 290 535C400 535 480 560 520 585C560 610 576 640 576 657C500 657 380 648 270 632C220 620 160 618 100 616C80 610 70 590 72 570C72 545 110 530 165 530C210 527 240 538 262 546"
              />
            </TreeBody>
          </SidePanel>
        </Column>
        <Column>
          <Panel $grow={475}>
            <TabBar>
              <WideTab type="button" $state="focus"><PictureIcon />场景编辑器</WideTab>
              <Menu />
            </TabBar>
            <SceneTools>
              <IconButton type="button" aria-label="放大" $w={25}><ZoomGlass plus /></IconButton>
              <IconButton type="button" aria-label="缩小" $w={24}><ZoomGlass /></IconButton>
              <IconButton type="button" aria-label="重置" $w={26}><Rotate s={14} /></IconButton>
              {(Object.keys(alignShapes) as AlignKind[]).map(k => (
                <IconButton key={k} type="button" aria-label={k} $w={28} $color="#757575"><AlignIcon kind={k} /></IconButton>
              ))}
              <BulbButton type="button" aria-label="光照"><BulbIcon /></BulbButton>
              <SelectWrap $w={125} $h={25} $bg={c.select} $arrow={12}>
                <select aria-label="设计分辨率"><option>Default De…</option></select>
                <TriDown />
              </SelectWrap>
              <IconButton type="button" aria-label="相机" $w={50}><CameraIcon /><Caret /></IconButton>
              <IconButton type="button" aria-label="设置" $w={48}><FaCog size={15} /><Caret /></IconButton>
              <IconButton type="button" aria-label="窗口" $w={25}><WindowIcon /></IconButton>
            </SceneTools>
            <Scene />
          </Panel>
          <Panel $grow={408}>
            <TabBar>
              <WideTab type="button"><FaFolder size={16} />资源预览</WideTab>
              <WideTab type="button"><ConsoleIcon />控制台</WideTab>
              <WideTab type="button" $state="active"><FaRunning size={16} />动画编辑器</WideTab>
              <Menu />
            </TabBar>
            <Animation />
          </Panel>
        </Column>
        <Column>
          <SidePanel $side="right" $grow={1}>
            <TabBar $end={10}>
              <WideTab type="button" $state="active"><FaCog size={16} />属性检查器</WideTab>
              <Tab type="button"><LinkIcon />服务</Tab>
              <Menu />
            </TabBar>
            <NavRow>
              <IconButton type="button" aria-label="后退" $w={15} $color="#5a9be0"><TriLeft /></IconButton>
              <IconButton type="button" aria-label="前进" $w={62} $color="#8a8a8a"><TriRight w={8} h={13} /></IconButton>
              <IconButton type="button" aria-label="锁定" $w={16}><FaLockOpen size={14} /></IconButton>
            </NavRow>
            <Inspector />
          </SidePanel>
        </Column>
      </Workspace>
      <StatusBar>
        <FaBell size={14} />
        <span>0</span>
        <span>版本 3.4.2</span>
      </StatusBar>
    </Page>
  );
}
